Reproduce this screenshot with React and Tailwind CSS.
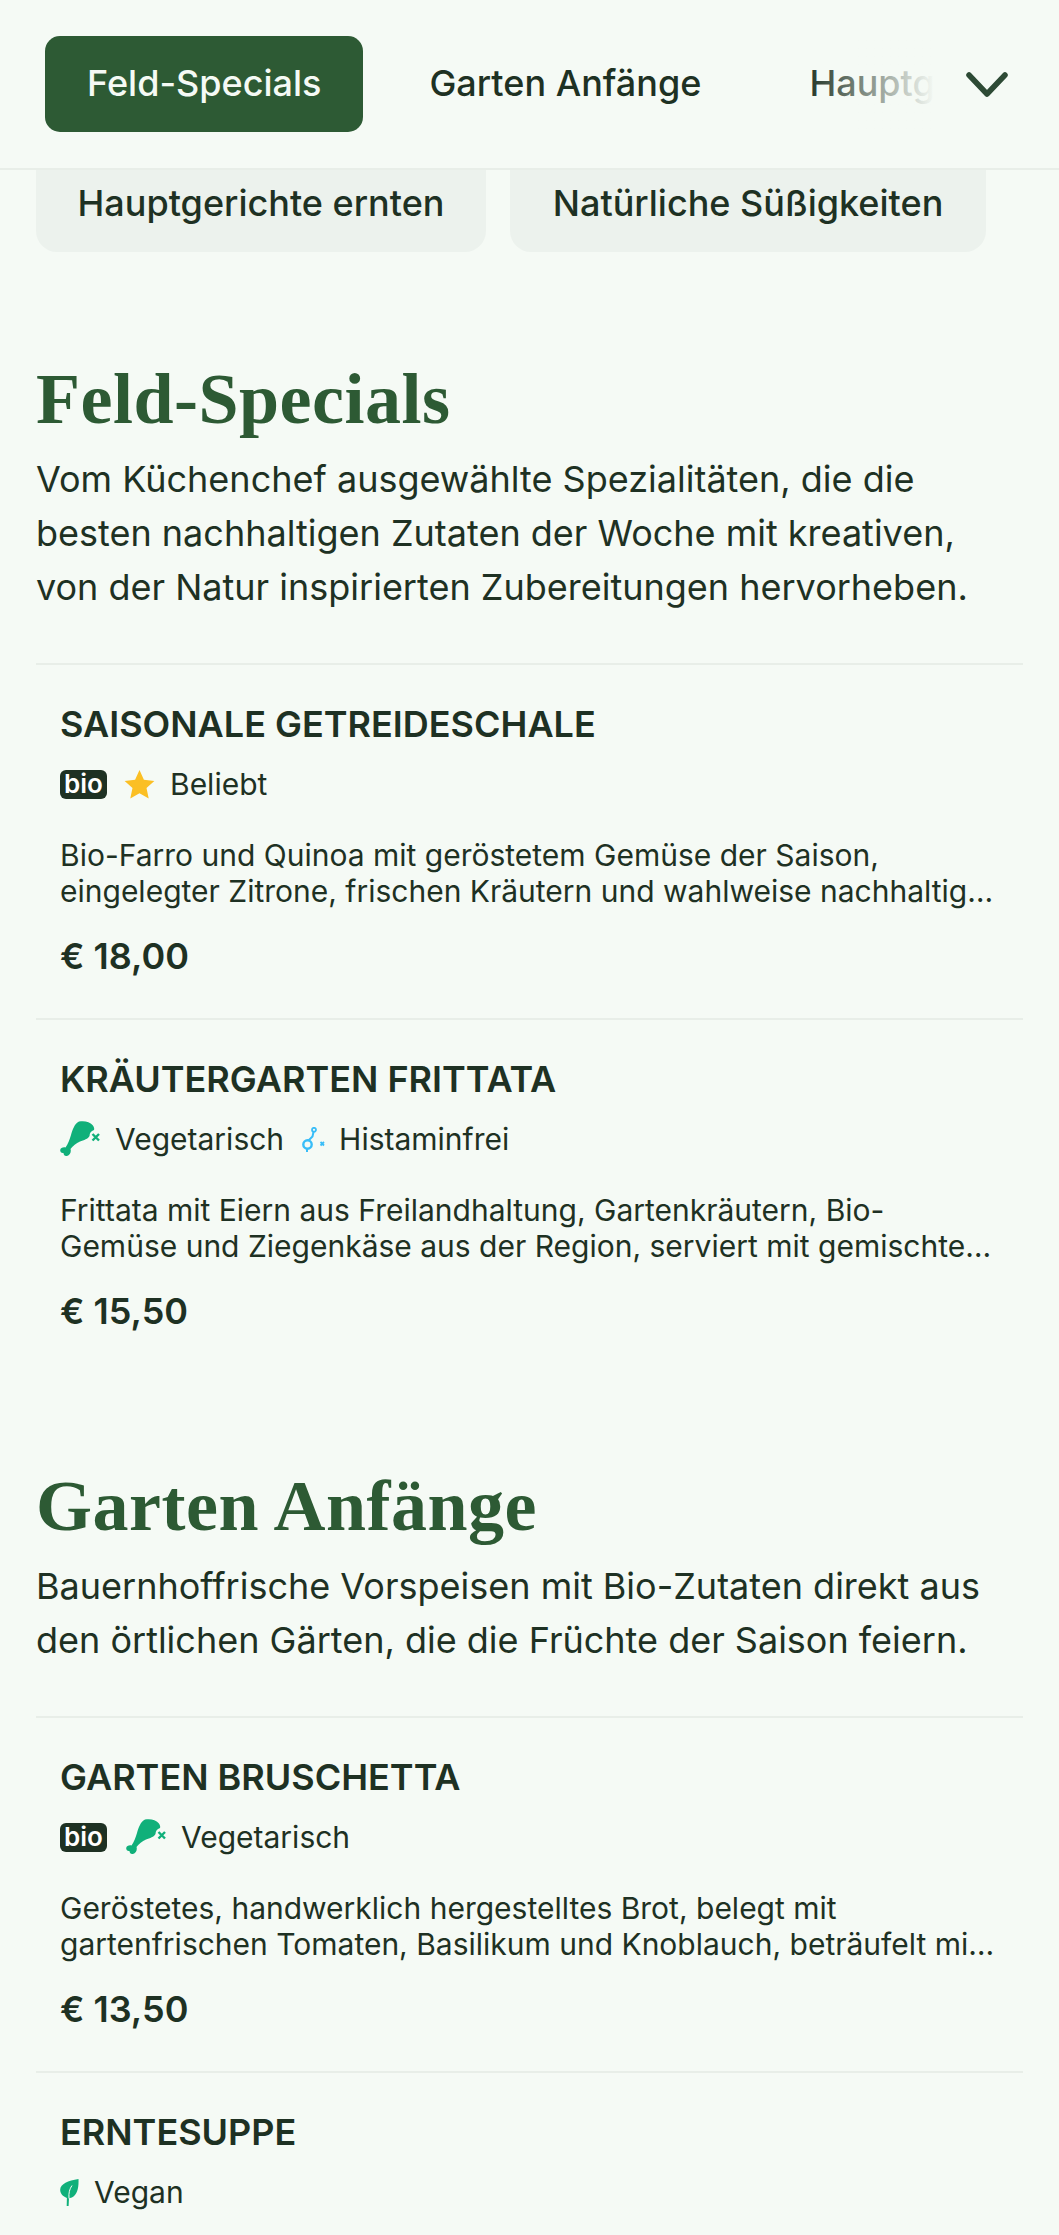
import React from 'react';

const sections = [
    {
        title: 'Feld-Specials',
        text: ['Vom Küchenchef ausgewählte Spezialitäten, die die', 'besten nachhaltigen Zutaten der Woche mit kreativen,', 'von der Natur inspirierten Zubereitungen hervorheben.'],
        items: [
            {
                name: 'SAISONALE GETREIDESCHALE',
                tags: ['bio', 'star'],
                desc: 'Bio-Farro und Quinoa mit geröstetem Gemüse der Saison, eingelegter Zitrone, frischen Kräutern und wahlweise nachhaltige Proteine vom Hof.',
                price: '€ 18,00',
            },
            {
                name: 'KRÄUTERGARTEN FRITTATA',
                tags: ['veg', 'hist'],
                desc: 'Frittata mit Eiern aus Freilandhaltung, Gartenkräutern, Bio-Gemüse und Ziegenkäse aus der Region, serviert mit gemischtem Blattsalat.',
                price: '€ 15,50',
            },
        ],
    },
    {
        title: 'Garten Anfänge',
        text: ['Bauernhoffrische Vorspeisen mit Bio-Zutaten direkt aus', 'den örtlichen Gärten, die die Früchte der Saison feiern.'],
        items: [
            {
                name: 'GARTEN BRUSCHETTA',
                tags: ['bio', 'veg'],
                desc: 'Geröstetes, handwerklich hergestelltes Brot, belegt mit gartenfrischen Tomaten, Basilikum und Knoblauch, beträufelt mit nativem Olivenöl extra.',
                price: '€ 13,50',
            },
            {
                name: 'ERNTESUPPE',
                tags: ['vegan'],
            },
        ],
    },
];

const Bio = () => (
    <span className="flex h-[29px] w-[47px] items-center justify-center rounded-[6px] bg-[#1e3123] text-[26px] font-semibold leading-none text-white">
        bio
    </span>
);

const Star = () => (
    <svg viewBox="0 0 24 24" className="-ml-[3px] h-[33px] w-[33px] fill-[#fbbf24]">
        <path d="M12 1.5l3.2 7.1 7.6.8-5.7 5.2 1.6 7.6L12 18.3l-6.7 3.900 1.600-7.600L1.200 9.400l7.600-.8z" />
    </svg>
);

const Drumstick = () => (
    <svg viewBox="0 0 40 36" className="h-[36px] w-[40px]">
        <path
            fill="#10b07a"
            d="M19 .5C24 -.5 30 .5 32.500 4C34 6 34.500 7.500 34 9C31 10 29.500 12 29.500 15C28 18 24 19 20 20.500C16 22 13 25 10.500 28C11.500 30.500 10 34.500 7 35C4.500 35.500 3.500 33.500 3.500 32C1.500 32.500 0 31 .2 29C.5 27 3 26 5.500 26.500C8 23 9.500 19 11 14C12.500 9 14.500 2.500 19 .5z"
        />
        <path d="M32.500 13l6.500 6.500M39 13l-6.500 6.500" stroke="#10b07a" strokeWidth="2.400" fill="none" />
    </svg>
);

const Molecule = () => (
    <svg viewBox="0 0 23 25" className="h-[25px] w-[23px]" fill="none">
        <circle cx="12" cy="2.800" r="2" stroke="#38bdf8" strokeWidth="1.800" />
        <path d="M11.500 5l-1 4.500L6.500 13.500" stroke="#38bdf8" strokeWidth="2" />
        <circle cx="5.500" cy="17.500" r="4.200" stroke="#38bdf8" strokeWidth="2.400" />
        <path d="M5 22v3" stroke="#38bdf8" strokeWidth="2" />
        <path d="M18.500 15l3.500 3.500M22 15l-3.500 3.500" stroke="#38bdf8" strokeWidth="1.800" />
    </svg>
);

const Leaf = () => (
    <svg viewBox="0 0 19 27" className="h-[27px] w-[19px]">
        <path fill="#10b07a" d="M18.500 0C18.800 7 18 14 13.500 17.500c-1.500 1.200-3.400 1.600-4.500 1.700L8.600 27H6.700l.2-8C3 17.500 0 14.500 .2 10.500 .5 5 8 1.500 18.500 0z" />
        <path d="M9 19.500C8.500 14 9.500 10 12 6.500" stroke="#f5faf5" strokeWidth="1" fill="none" />
    </svg>
);

const TagRow = ({ tags }) => (
    <div className="mt-[18px] flex h-[36px] items-center text-[30px] leading-[36px] text-[#1e3123]">
        {tags.map((tag) => {
            if (tag === 'bio') return <span key={tag} className="mr-[19px]"><Bio /></span>;
            if (tag === 'star') {
                return (
                    <span key={tag} className="flex items-center gap-[14px]">
                        <Star />
                        Beliebt
                    </span>
                );
            }
            if (tag === 'veg') {
                return (
                    <span key={tag} className="mr-[18px] flex items-center gap-[15px]">
                        <Drumstick />
                        Vegetarisch
                    </span>
                );
            }
            if (tag === 'hist') {
                return (
                    <span key={tag} className="flex items-center gap-[14px]">
                        <Molecule />
                        Histaminfrei
                    </span>
                );
            }
            return (
                <span key={tag} className="flex items-center gap-[15px]">
                    <Leaf />
                    Vegan
                </span>
            );
        })}
    </div>
);

const MenuItem = ({ item }) => (
    <div className="border-t-[2px] border-[#e8eee8] px-[24px] pb-[38px] pt-[35px]">
        <h3 className="text-[36px] font-semibold leading-[48px] text-[#1e3123]">{item.name}</h3>
        {item.tags && <TagRow tags={item.tags} />}
        {item.desc && (
            <p className="mt-[35px] line-clamp-2 text-[30px] leading-[36px] text-[#1e3123]">{item.desc}</p>
        )}
        {item.price && <p className="mt-[23px] text-[36px] font-semibold leading-[48px] text-[#1e3123]">{item.price}</p>}
    </div>
);

const Chevron = () => (
    <svg viewBox="0 0 40 22" className="h-[22px] w-[40px] overflow-visible" fill="none">
        <path d="M2 2l18 19L38 2" stroke="#2d4a35" strokeWidth="5.500" strokeLinecap="round" strokeLinejoin="round" />
    </svg>
);

const App = () => {
    return (
        <div className="h-screen overflow-hidden bg-[#f5faf5] font-['Inter',sans-serif]">
            <header className="flex h-[170px] items-center border-b-[2px] border-[#e8eee8] pl-[45px] pr-[52px]">
                <div className="relative flex w-[890px] gap-[24px] overflow-hidden">
                    <button className="h-[96px] shrink-0 rounded-[15px] bg-[#2d5a34] px-[42px] pb-[2px] text-[36px] font-medium text-[#f5faf5]">Feld-Specials</button>
                    <button className="h-[96px] shrink-0 px-[42px] pb-[2px] text-[36px] font-medium text-[#1e3123]">Garten Anfänge</button>
                    <button className="h-[96px] shrink-0 px-[42px] pb-[2px] text-[36px] font-medium text-[#1e3123]">Hauptgerichte ernten</button>
                    <div className="absolute bottom-0 right-0 top-0 w-[130px] bg-gradient-to-r from-transparent to-[#f5faf5]" />
                </div>
                <div className="ml-auto flex">
                    <Chevron />
                </div>
            </header>

            <div className="flex gap-[24px] pl-[36px]">
                <div className="flex h-[82px] w-[450px] items-center justify-center rounded-b-[21px] bg-[#ecf2ed] pb-[16px] text-[36px] font-medium text-[#1e3123]">Hauptgerichte ernten</div>
                <div className="flex h-[82px] w-[476px] items-center justify-center rounded-b-[21px] bg-[#ecf2ed] pb-[16px] text-[36px] font-medium text-[#1e3123]">Natürliche Süßigkeiten</div>
            </div>

            <main className="px-[36px] pt-[111px]">
                {sections.map((section) => (
                    <section key={section.title} className="mb-[97px]">
                        <h2 className="font-['Liberation_Serif',serif] text-[72px] font-bold leading-[72px] tracking-[0.5px] text-[#2d5a34]">{section.title}</h2>
                        <div className="mb-[49px] mt-[17px] text-[36px] leading-[54px] text-[#1e3123]">
                            {section.text.map((line) => (
                                <p key={line}>{line}</p>
                            ))}
                        </div>
                        {section.items.map((item) => (
                            <MenuItem key={item.name} item={item} />
                        ))}
                    </section>
                ))}
            </main>
        </div>
    );
};

export default App;
